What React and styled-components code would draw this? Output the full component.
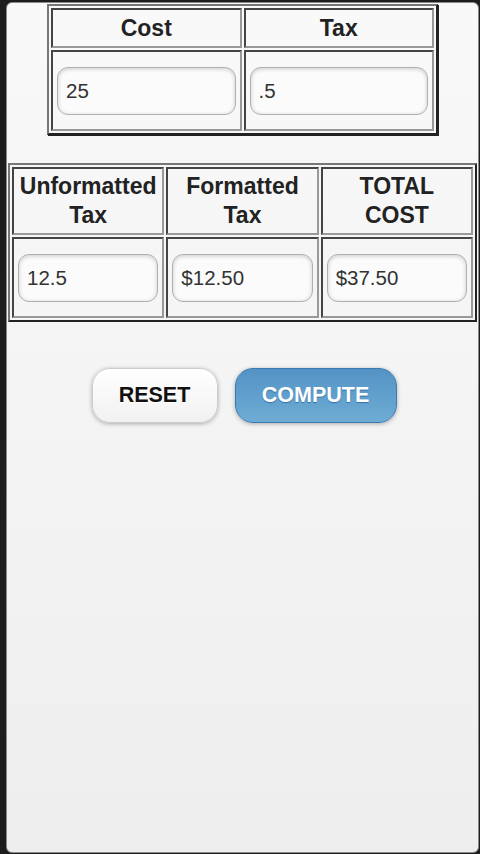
import styled, { createGlobalStyle } from "styled-components";

const GlobalStyle = createGlobalStyle`
    html, body {
        margin: 0;
        padding: 0;
        height: 100%;
        background-color: #1d1d1d;
    }
    #root {
        height: 100%;
    }
`

export default function App(){
    return (
        <>
            <GlobalStyle />
            <Page>
                <Tabela>
                    <tbody>
                        <tr>
                            <Titulo>Cost</Titulo>
                            <Titulo>Tax</Titulo>
                        </tr>
                        <tr>
                            <Celula><Campo defaultValue="25" /></Celula>
                            <Celula><Campo defaultValue=".5" /></Celula>
                        </tr>
                    </tbody>
                </Tabela>
                <Tabela $wide>
                    <tbody>
                        <tr>
                            <Titulo $tall>Unformatted<br />Tax</Titulo>
                            <Titulo $tall>Formatted<br />Tax</Titulo>
                            <Titulo $tall>TOTAL<br />COST</Titulo>
                        </tr>
                        <tr>
                            <Celula><Campo defaultValue="12.5" /></Celula>
                            <Celula><Campo defaultValue="$12.50" /></Celula>
                            <Celula><Campo defaultValue="$37.50" /></Celula>
                        </tr>
                    </tbody>
                </Tabela>
                <Botoes>
                    <Botao>RESET</Botao>
                    <Botao $primary>COMPUTE</Botao>
                </Botoes>
            </Page>
        </>
    );
}

const Page = styled.div`
    box-sizing: border-box;
    height: calc(100% - 3px);
    margin: 2px 1px 1px 6px;
    border: 1px solid #8a8a8a;
    border-radius: 6px;
    background: linear-gradient(#f9f9f9, #eeeeee);
    font-family: "Liberation Sans", Arial, sans-serif;
    padding-top: 1px;
`

const Tabela = styled.table`
    margin: ${props => props.$wide ? "28px 0 0 1px" : "0 auto"};
    width: ${props => props.$wide ? "469px" : "391px"};
    table-layout: fixed;
    border-collapse: separate;
    border-spacing: 2px;
    border: 2px solid;
    border-color: #777 #222 #222 #777;
    box-shadow: ${props => props.$wide ? "none" : "1px 1px 0 #222"};
`

const Titulo = styled.th`
    box-sizing: border-box;
    height: ${props => props.$tall ? "68px" : "40px"};
    padding: 0;
    border: 2px solid;
    border-color: #444 #999 #999 #444;
    font-size: 23px;
    line-height: 29px;
    font-weight: 700;
    color: #222;
    text-align: center;
`

const Celula = styled.td`
    box-sizing: border-box;
    height: 81px;
    padding: 0 4px 0 4px;
    border: 2px solid;
    border-color: #444 #999 #999 #444;
`

const Campo = styled.input`
    box-sizing: border-box;
    display: block;
    width: 100%;
    height: 48px;
    padding: 0 8px;
    border: 1px solid #b0b0b0;
    border-radius: 11px;
    background-color: #fbfbfb;
    box-shadow: inset 0 1px 4px rgba(0, 0, 0, 0.2);
    font-family: "Liberation Sans", Arial, sans-serif;
    font-size: 20.5px;
    color: #333;
    outline: none;
`

const Botoes = styled.div`
    display: flex;
    justify-content: center;
    gap: 17px;
    margin-top: 46px;
    padding-left: 3px;
`

const Botao = styled.button`
    box-sizing: border-box;
    height: 55px;
    width: ${props => props.$primary ? "162px" : "126px"};
    border-radius: 18px;
    border: 1px solid ${props => props.$primary ? "#3a7ab0" : "#cccccc"};
    background: ${props => props.$primary
        ? "linear-gradient(#5393c5, #6facd5)"
        : "linear-gradient(#ffffff, #f1f1f1)"};
    box-shadow: 0 1px 4px rgba(0, 0, 0, 0.3);
    color: ${props => props.$primary ? "#ffffff" : "#111111"};
    text-shadow: ${props => props.$primary ? "0 1px 1px #3373a5" : "0 1px 0 #ffffff"};
    font-family: "Liberation Sans", Arial, sans-serif;
    font-size: 21.5px;
    font-weight: 700;
`
